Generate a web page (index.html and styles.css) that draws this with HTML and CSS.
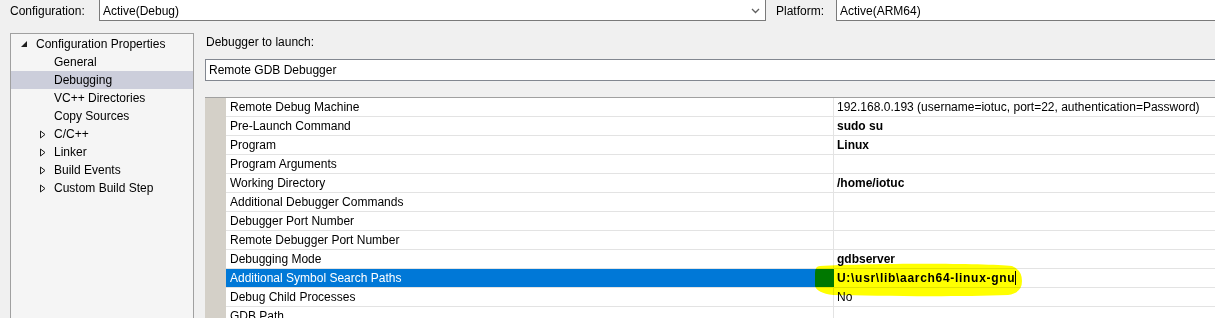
FILE: index.html
```html
<!DOCTYPE html>
<html>
  <head>
    <meta charset="UTF-8" />
    <title>Debugging Property Pages</title>
    <link rel="stylesheet" href="styles.css">
  </head>
  <body>
    <div class="topbar">
      <span class="lbl">Configuration:</span>
      <div class="combo config">
        <span>Active(Debug)</span>
        <svg class="chev" width="9" height="6" viewBox="0 0 9 6"><path d="M1 1 L4.5 4.5 L8 1" fill="none" stroke="#606060" stroke-width="1.3"/></svg>
      </div>
      <span class="lbl plat">Platform:</span>
      <div class="combo platform"><span>Active(ARM64)</span></div>
    </div>
    <div class="main">
      <div class="tree">
        <div class="node root"><svg class="tw" width="8" height="8" viewBox="0 0 8 8"><path d="M7 1 L7 7 L1 7 Z" fill="#1e1e1e"/></svg>Configuration Properties</div>
        <div class="node leaf">General</div>
        <div class="node leaf sel">Debugging</div>
        <div class="node leaf">VC++ Directories</div>
        <div class="node leaf">Copy Sources</div>
        <div class="node group"><svg class="tw" width="8" height="9" viewBox="0 0 8 9"><path d="M1.5 1 L6 4.5 L1.5 8 Z" fill="none" stroke="#1e1e1e" stroke-width="1"/></svg>C/C++</div>
        <div class="node group"><svg class="tw" width="8" height="9" viewBox="0 0 8 9"><path d="M1.5 1 L6 4.5 L1.5 8 Z" fill="none" stroke="#1e1e1e" stroke-width="1"/></svg>Linker</div>
        <div class="node group"><svg class="tw" width="8" height="9" viewBox="0 0 8 9"><path d="M1.5 1 L6 4.5 L1.5 8 Z" fill="none" stroke="#1e1e1e" stroke-width="1"/></svg>Build Events</div>
        <div class="node group"><svg class="tw" width="8" height="9" viewBox="0 0 8 9"><path d="M1.5 1 L6 4.5 L1.5 8 Z" fill="none" stroke="#1e1e1e" stroke-width="1"/></svg>Custom Build Step</div>
      </div>
      <div class="pane">
        <div class="caption">Debugger to launch:</div>
        <div class="picker">Remote GDB Debugger</div>
        <div class="grid">
          <div class="gutter"></div>
          <div class="rows">
            <div class="row"><div class="name">Remote Debug Machine</div><div class="val">192.168.0.193 (username=iotuc, port=22, authentication=Password)</div></div>
            <div class="row"><div class="name">Pre-Launch Command</div><div class="val b">sudo su</div></div>
            <div class="row"><div class="name">Program</div><div class="val b">Linux</div></div>
            <div class="row"><div class="name">Program Arguments</div><div class="val"></div></div>
            <div class="row"><div class="name">Working Directory</div><div class="val b">/home/iotuc</div></div>
            <div class="row"><div class="name">Additional Debugger Commands</div><div class="val"></div></div>
            <div class="row"><div class="name">Debugger Port Number</div><div class="val"></div></div>
            <div class="row"><div class="name">Remote Debugger Port Number</div><div class="val"></div></div>
            <div class="row"><div class="name">Debugging Mode</div><div class="val b">gdbserver</div></div>
            <div class="row active"><div class="name">Additional Symbol Search Paths</div><div class="val b edit">U:\usr\lib\aarch64-linux-gnu<span class="caret"></span></div></div>
            <div class="row"><div class="name">Debug Child Processes</div><div class="val">No</div></div>
            <div class="row"><div class="name">GDB Path</div><div class="val"></div></div>
          </div>
        </div>
      </div>
    </div>
    <svg class="marker" width="1215" height="318" viewBox="0 0 1215 318">
      <path d="M820 266 C870 263 985 263 1012 266 Q1022 270 1022 281 Q1022 293 1008 295 C955 297 875 296 833 295 Q817 293 815 286 L815 273 Q815 266 820 266 Z" fill="#ffff00"/>
    </svg>
  </body>
</html>
```
FILE: styles.css
```css
* {
  box-sizing: border-box;
}
html, body {
  margin: 0;
  height: 100%;
  overflow: hidden;
}
body {
  background: #f0f0f0;
  font-family: "Liberation Sans", Arial, sans-serif;
  font-size: 12px;
  color: #000000;
  position: relative;
}
.topbar {
  display: flex;
  align-items: stretch;
  height: 22px;
  margin-top: -1px;
}
.lbl {
  display: flex;
  align-items: center;
  padding-left: 10px;
  width: 99px;
  padding-top: 1px;
}
.lbl.plat {
  width: 70px;
}
.combo {
  display: flex;
  align-items: center;
  background: #ffffff;
  border: 1px solid #7a7a7a;
  padding: 1px 0 0 3px;
}
.combo.config {
  width: 667px;
  justify-content: space-between;
  padding-right: 5px;
}
.combo.platform {
  flex: 1;
  border-right: none;
}
.main {
  display: flex;
  margin-top: 12px;
}
.tree {
  margin-left: 10px;
  width: 184px;
  height: 300px;
  background: #f5f5f5;
  border: 1px solid #a0a0a0;
  padding-top: 1px;
}
.node {
  display: flex;
  align-items: center;
  height: 18px;
  white-space: nowrap;
}
.node.root {
  padding-left: 9px;
}
.node.root .tw {
  margin-right: 8px;
  margin-top: -1px;
}
.node.leaf {
  padding-left: 43px;
}
.node.group {
  padding-left: 28px;
}
.node.group .tw {
  margin-right: 7px;
}
.node.sel {
  background: #cccedb;
}
.pane {
  flex: 1;
  margin-left: 11px;
}
.caption {
  height: 18px;
  line-height: 18px;
  padding-left: 1px;
}
.picker {
  margin-top: 8px;
  height: 22px;
  line-height: 20px;
  background: #ffffff;
  border: 1px solid #828790;
  border-right: none;
  padding-left: 3px;
}
.grid {
  margin-top: 16px;
  border-top: 1px solid #a0a0a0;
  display: flex;
  background: #ffffff;
  height: 300px;
}
.gutter {
  width: 21px;
  background: #d4d0c8;
}
.rows {
  flex: 1;
}
.row {
  display: flex;
  height: 19px;
  border-bottom: 1px solid #e3e3e3;
}
.name {
  width: 608px;
  padding: 1px 0 0 4px;
  line-height: 17px;
  border-right: 1px solid #e3e3e3;
  white-space: nowrap;
}
.val {
  flex: 1;
  padding: 1px 0 0 3px;
  line-height: 17px;
  white-space: nowrap;
}
.val.b {
  font-weight: bold;
}
.val.edit {
  letter-spacing: 0.7px;
}
.row.active .name {
  background: #0078d7;
  color: #ffffff;
  border-right: 18px solid #0078d7;
}
.caret {
  display: inline-block;
  width: 1px;
  height: 14px;
  background: #000000;
  vertical-align: -3px;
}
.marker {
  position: absolute;
  left: 0;
  top: 0;
  pointer-events: none;
  mix-blend-mode: multiply;
}
```
